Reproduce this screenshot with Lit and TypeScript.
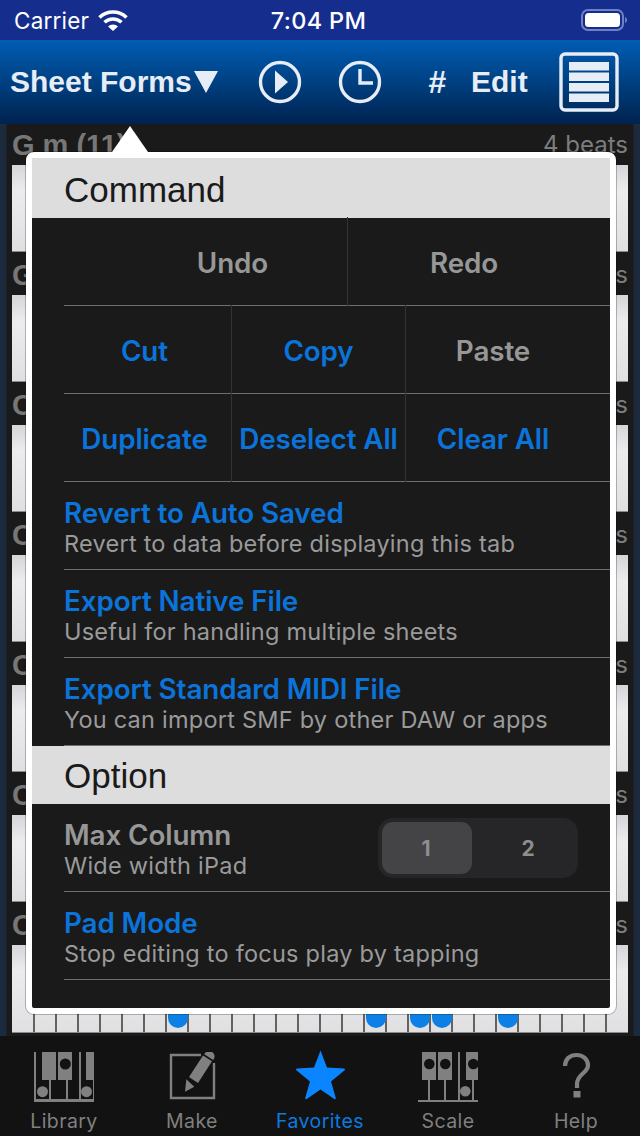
import { LitElement, html, css, svg } from "lit";
import { customElement } from "lit/decorators.js";

const wifi = html`<svg class="wifi" width="32" height="22" viewBox="0 0 32 22"><path d="M2.500 8.500A19.500 19.500 0 0 1 29.500 8.500" fill="none" stroke="#fff" stroke-width="3.600"/><path d="M7.500 13.300A12.500 12.500 0 0 1 24.500 13.300" fill="none" stroke="#fff" stroke-width="3.600"/><path d="M11 17.600a7 7 0 0 1 10 0L16 22z" fill="#fff"/></svg>`;
const battery = html`<svg width="46" height="22" viewBox="0 0 46 22"><rect x="1" y="1" width="41" height="20" rx="6" fill="none" stroke="#6f81c4" stroke-width="2"/><rect x="4" y="4" width="35" height="14" rx="3.500" fill="#fff"/><path d="M44 8c1.400.4 2 1.600 2 3s-.6 2.600-2 3z" fill="#6f81c4"/></svg>`;
const play = html`<svg width="44" height="44" viewBox="0 0 44 44"><circle cx="22" cy="22" r="19.500" fill="none" stroke="#e6edf6" stroke-width="3.400"/><path d="M17 10.500 30 22 17 33.500z" fill="#e6edf6"/></svg>`;
const clock = html`<svg width="44" height="44" viewBox="0 0 44 44"><circle cx="22" cy="22" r="19.500" fill="none" stroke="#e6edf6" stroke-width="3.400"/><path d="M22 9v14h13" fill="none" stroke="#e6edf6" stroke-width="3.400"/></svg>`;
const listIcon = html`<svg width="60" height="60" viewBox="0 0 60 60"><rect x="2" y="2" width="56" height="56" rx="4" fill="none" stroke="#e6edf6" stroke-width="3.400"/><g fill="#e6edf6"><rect x="10" y="10" width="40" height="8.500"/><rect x="10" y="20.500" width="40" height="8.500"/><rect x="10" y="31" width="40" height="8.500"/><rect x="10" y="41.500" width="40" height="8.500"/></g></svg>`;

const G = "#808080";
const D = "#121212";
const library = svg`<g fill="${G}"><rect x="0" y="0" width="2" height="50"/><rect x="45" y="0" width="2" height="50"/><rect x="59" y="0" width="2" height="50"/><rect x="0" y="47" width="60" height="3"/><rect x="8" y="0" width="14" height="28"/><rect x="24" y="0" width="14" height="28"/><rect x="52" y="0" width="8" height="28"/><rect x="15" y="28" width="2" height="20"/><rect x="32" y="28" width="2" height="20"/><circle cx="8.500" cy="39.700" r="5.500"/><circle cx="52.500" cy="39.700" r="5.500"/><circle cx="31.300" cy="12" r="5.500" fill="${D}"/></g>`;
const make = svg`<path d="M35 3H5V46H48V11" fill="none" stroke="${G}" stroke-width="2.400"/><path d="M38.700 1.500a5 5 0 0 1 9 5.800l-.5.7-9-5.800zM37 3.500 46 9.300 32 31 23 25zM19 39.700 20.300 27.300 28.300 34.700z" fill="${G}"/>`;
const star = svg`<path d="M25.500 1.500 32 18.500 49 19.500a1 1 0 0 1 .6 1.800L36 32.500 40.800 49a1 1 0 0 1-1.500 1.100L25.500 40.500 11.700 50.100A1 1 0 0 1 10.200 49L15 32.500 1.400 21.300A1 1 0 0 1 2 19.500L19 18.500z" fill="#0a84ff"/>`;
const scale = svg`<g fill="${G}"><rect x="0" y="48" width="60" height="2.500"/><rect x="4" y="0" width="14" height="28"/><rect x="20" y="0" width="14" height="28"/><rect x="48" y="0" width="12" height="28"/><rect x="10" y="28" width="2" height="20"/><rect x="26" y="28" width="2" height="20"/><rect x="40" y="0" width="2" height="48"/><rect x="54" y="28" width="2" height="20"/><circle cx="47.300" cy="39.300" r="5.300"/><circle cx="11.300" cy="12" r="5.300" fill="${D}"/><circle cx="27.300" cy="12" r="5.300" fill="${D}"/><svg x="48" y="0" width="12" height="28"><circle cx="7.300" cy="12" r="5.300" fill="${D}"/></svg></g>`;
const help = svg`<path d="M4 14C4 7 9 3 15.500 3S27 7 27 13.500C27 21 16 22 16 32V36" fill="none" stroke="${G}" stroke-width="4.200"/><rect x="12.500" y="39" width="7" height="6.500" fill="${G}"/>`;

const tabs = [
  { label: "Library", icon: library, w: 60, h: 50, vb: "0 0 60 50" },
  { label: "Make", icon: make, w: 52, h: 50, vb: "0 0 52 50" },
  { label: "Favorites", icon: star, w: 51, h: 52, vb: "0 0 51 52", active: true },
  { label: "Scale", icon: scale, w: 60, h: 50, vb: "0 0 60 50" },
  { label: "Help", icon: help, w: 30, h: 50, vb: "0 0 30 50" },
];

const sheets = [
  { title: "G m (11)", h: 87 },
  { title: "G", h: 87 },
  { title: "C", h: 87 },
  { title: "C", h: 87 },
  { title: "C", h: 87 },
  { title: "C", h: 87 },
  { title: "C", h: 88 },
];
const dots = [7, 16, 18, 19, 22];

@customElement("app-root")
export class AppRoot extends LitElement {
  static styles = css`
    :host { display: block; width: 640px; height: 1136px; position: relative; overflow: hidden; background: #1a1a1a; font-family: Inter, "Liberation Sans", sans-serif; }
    .status { height: 40px; box-sizing: border-box; background: #152d8c; color: #fff; display: grid; grid-template-columns: 1fr auto 1fr; align-items: center; padding: 0 14px; }
    .left { display: flex; align-items: center; gap: 8px; }
    .carrier { font-size: 22.500px; letter-spacing: .2px; }
    .time { font-weight: 500; font-size: 23.500px; letter-spacing: .35px; margin-left: -3px; }
    .right { display: flex; justify-content: flex-end; margin-right: -1px; }
    .nav { height: 84px; box-sizing: border-box; background: linear-gradient(#005db4, #00234f); color: #e6edf6; display: flex; align-items: center; padding-left: 10px; font-family: "Liberation Sans", sans-serif; font-weight: 700; }
    .title { font-size: 30px; width: 181px; white-space: nowrap; }
    .caret { width: 0; height: 0; border-left: 12px solid transparent; border-right: 12px solid transparent; border-top: 22px solid #e6edf6; margin: 0 0 0 3px; }
    .play { margin-left: 40px; display: flex; }
    .clock { margin-left: 36px; display: flex; }
    .hash { margin-left: 46px; font-size: 32px; font-style: italic; width: 43px; }
    .edit { font-size: 30px; width: 88px; }
    .list { display: flex; }
    .sheets { height: 912px; box-sizing: border-box; background: linear-gradient(90deg, #1b2a3c 0, #1b2a3c 6px, #1a1a1a 7px, #1a1a1a 633px, #1b2a3c 634px); padding: 0 12px; overflow: hidden; }
    .sheet { height: 130px; display: flex; flex-direction: column; }
    .sheet-head { flex: none; height: 41px; box-sizing: border-box; display: flex; justify-content: space-between; align-items: flex-end; color: #777; line-height: 30px; padding-bottom: 5px; }
    .chord { font-family: "Liberation Sans", sans-serif; font-weight: 700; font-size: 29px; }
    .beats { font-size: 24px; color: #7d7d7d; }
    .keys { display: grid; grid-template-columns: repeat(28, 22px); flex: none; border-bottom: 1px solid #8a8a8a; box-sizing: border-box; }
    .key { background: linear-gradient(#d6d6da, #ececee 30%, #e0e0e2); border-left: 1px solid #626262; border-right: 1px solid #626262; box-sizing: border-box; position: relative; }
    .key:first-child { border-left: 0; }
    .key:last-child { border-right: 0; }
    .dot { position: absolute; left: 1px; width: 20px; bottom: 4px; height: 28px; background: #0c80e4; border-radius: 10px; }
    .tabbar { height: 100px; background: #121212; display: grid; grid-template-columns: repeat(5, 128px); }
    .tab { display: flex; flex-direction: column; align-items: center; color: #808080; font-size: 19.500px; letter-spacing: .4px; padding-top: 16px; }
    .tab.active { color: #0a7be0; }
    .tab svg { display: block; }
    .tab.active svg { margin: -3px 0 1px; }
    .tab span { margin-top: 7px; line-height: 24px; }
    .pop { position: absolute; left: 26px; top: 152px; width: 590px; height: 862px; box-sizing: border-box; border: 6px solid #fff; border-radius: 8px; background: #1a1a1a; box-shadow: 0 0 0 1px rgba(0,0,0,.25); }
    .arrow { position: absolute; left: 80px; top: -32px; width: 0; height: 0; border-left: 18px solid transparent; border-right: 18px solid transparent; border-bottom: 26px solid #fff; }
    .head { background: #dddddd; color: #1a1a1a; padding-left: 32px; display: flex; align-items: center; font-size: 35px; font-family: "Liberation Sans", sans-serif; box-sizing: border-box; }
    .h-cmd { height: 60px; padding-top: 3px; }
    .h-opt { height: 58px; padding-top: 2px; }
    .row { height: 88px; box-sizing: border-box; margin-left: 32px; border-bottom: 1px solid #6e6e6e; display: flex; }
    .cell { display: flex; align-items: center; justify-content: center; font-size: 27.800px; font-weight: 600; color: #0a74da; white-space: nowrap; letter-spacing: -.1px; padding-top: 2px; box-sizing: border-box; }
    .cell.off { color: #979797; }
    .sep { width: 1px; background: #333; flex: none; margin: -1px 0; }
    .detail { display: flex; flex-direction: column; justify-content: center; flex: 1; padding: 4px 0 0; }
    .t { font-size: 27.800px; font-weight: 600; color: #0a74da; line-height: 32px; letter-spacing: -.1px; }
    .t.off { color: #979797; }
    .s { font-size: 23.500px; color: #9a9a9a; line-height: 30px; letter-spacing: .24px; }
    .seg { width: 200px; height: 60px; box-sizing: border-box; margin: 14px 32px 0 0; border-radius: 15px; background: #262628; padding: 4px; display: grid; grid-template-columns: 90px 1fr; color: #8e8e8e; font-weight: 700; font-size: 21px; }
    .seg div { display: flex; align-items: center; justify-content: center; border-radius: 11px; }
    .seg .on { background: #444446; padding-right: 2px; }
    .seg .two { padding-left: 10px; }
  `;

  private cells(items: { t: string; w: number; off?: boolean; pl?: number; pr?: number }[]) {
    return items.map((c, i) => html`${i ? html`<div class="sep"></div>` : ""}<div class="cell ${c.off ? "off" : ""}" style="width:${c.w}px;padding-left:${c.pl ?? 0}px;padding-right:${c.pr ?? 0}px">${c.t}</div>`);
  }

  private detail(t: string, s: string) {
    return html`<div class="row"><div class="detail"><div class="t">${t}</div><div class="s">${s}</div></div></div>`;
  }

  render() {
    return html`
      <div class="status">
        <div class="left"><span class="carrier">Carrier</span>${wifi}</div>
        <div class="time">7:04 PM</div>
        <div class="right">${battery}</div>
      </div>
      <div class="nav">
        <div class="title">Sheet Forms</div><div class="caret"></div>
        <div class="play">${play}</div>
        <div class="clock">${clock}</div>
        <div class="hash">#</div>
        <div class="edit">Edit</div>
        <div class="list">${listIcon}</div>
      </div>
      <div class="sheets">
        ${sheets.map((s, si) => html`<div class="sheet">
          <div class="sheet-head"><span class="chord">${s.title}</span><span class="beats">4 beats</span></div>
          <div class="keys" style="height:${s.h}px">
            ${Array.from({ length: 28 }, (_, i) => html`<div class="key">${si === 6 && dots.includes(i) ? html`<div class="dot"></div>` : ""}</div>`)}
          </div>
        </div>`)}
      </div>
      <div class="tabbar">
        ${tabs.map((t) => html`<div class="tab ${t.active ? "active" : ""}">
          <svg width=${t.w} height=${t.h} viewBox=${t.vb}>${t.icon}</svg><span>${t.label}</span>
        </div>`)}
      </div>
      <div class="pop">
        <div class="arrow"></div>
        <div class="head h-cmd">Command</div>
        <div class="row">${this.cells([{ t: "Undo", w: 283, off: true, pl: 54 }, { t: "Redo", w: 232, off: true }])}</div>
        <div class="row">${this.cells([{ t: "Cut", w: 167, pr: 6 }, { t: "Copy", w: 173 }, { t: "Paste", w: 174, off: true }])}</div>
        <div class="row">${this.cells([{ t: "Duplicate", w: 167, pr: 6 }, { t: "Deselect All", w: 173 }, { t: "Clear All", w: 174 }])}</div>
        ${this.detail("Revert to Auto Saved", "Revert to data before displaying this tab")}
        ${this.detail("Export Native File", "Useful for handling multiple sheets")}
        ${this.detail("Export Standard MIDI File", "You can import SMF by other DAW or apps")}
        <div class="head h-opt">Option</div>
        <div class="row">
          <div class="detail"><div class="t off">Max Column</div><div class="s">Wide width iPad</div></div>
          <div class="seg"><div class="on">1</div><div class="two">2</div></div>
        </div>
        ${this.detail("Pad Mode", "Stop editing to focus play by tapping")}
      </div>
    `;
  }
}
